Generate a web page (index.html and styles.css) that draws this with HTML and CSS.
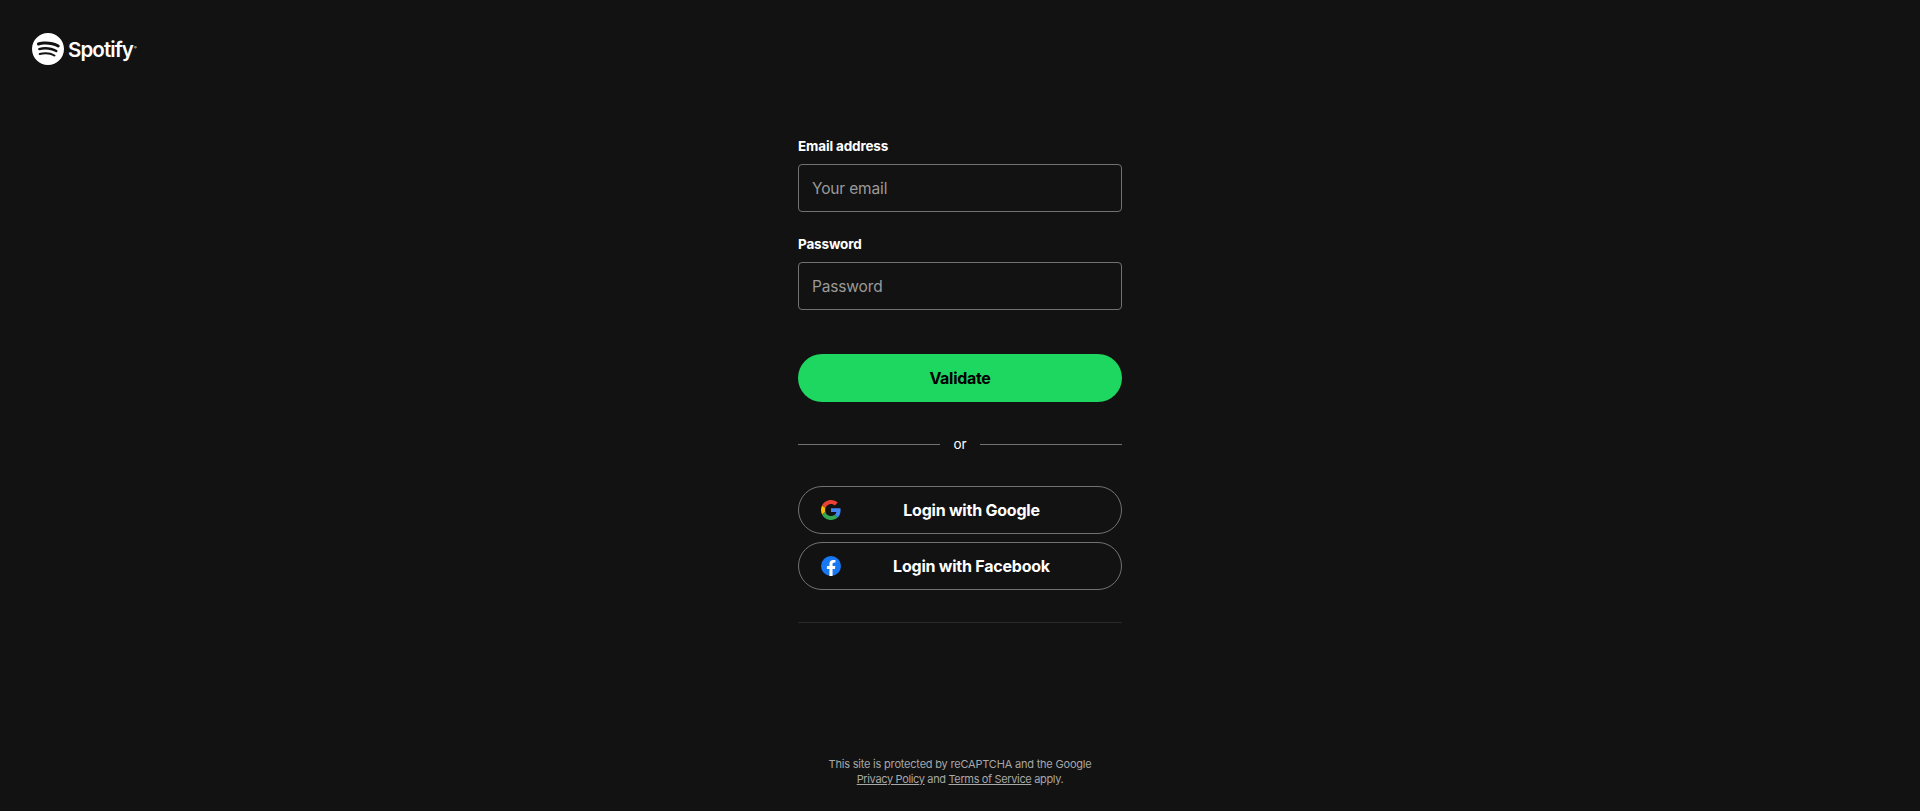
FILE: index.html
```html
<!DOCTYPE html>
<html lang="en">
<head>
  <meta charset="UTF-8" />
  <meta name="viewport" content="width=device-width, initial-scale=1.0"/>
  <title>Login - Spotify</title>
  <link rel="stylesheet" href="styles.css">
</head>
<body>
  <header class="topbar">
    <a class="brand" href="#">
      <svg class="brand-icon" viewBox="0 0 24 24"><path fill="#fff" d="M12 0C5.4 0 0 5.4 0 12s5.4 12 12 12 12-5.4 12-12S18.66 0 12 0zm5.521 17.34c-.24.359-.66.48-1.021.24-2.82-1.74-6.36-2.101-10.561-1.141-.418.122-.779-.179-.899-.539-.12-.421.18-.78.54-.9 4.56-1.021 8.52-.6 11.64 1.32.42.18.479.659.301 1.02zm1.44-3.3c-.301.42-.841.6-1.262.3-3.239-1.98-8.159-2.58-11.939-1.38-.479.12-1.02-.12-1.14-.6-.12-.48.12-1.021.6-1.141C9.6 9.9 15 10.561 18.72 12.84c.361.181.54.78.241 1.2zm.12-3.36C15.24 8.4 8.82 8.16 5.16 9.301c-.6.179-1.2-.181-1.38-.721-.18-.601.18-1.2.72-1.381 4.26-1.26 11.28-1.02 15.721 1.621.539.3.719 1.02.419 1.56-.299.421-1.02.599-1.559.3z"/></svg>
      <span class="brand-name">Spotify</span>
    </a>
  </header>

  <main class="login">
    <form class="login-form">
      <div class="field">
        <label for="email">Email address</label>
        <input type="text" id="email" placeholder="Your email"/>
      </div>
      <div class="field">
        <label for="password">Password</label>
        <input type="password" id="password" placeholder="Password"/>
      </div>
      <button type="button" class="btn-validate">Validate</button>
    </form>

    <div class="divider"><span>or</span></div>

    <div class="socials">
      <button type="button" class="btn-social">
        <svg class="social-icon" viewBox="0 0 48 48">
          <path fill="#EA4335" d="M24 9.5c3.54 0 6.71 1.22 9.21 3.6l6.85-6.85C35.9 2.38 30.47 0 24 0 14.62 0 6.51 5.38 2.56 13.22l7.98 6.19C12.43 13.72 17.74 9.5 24 9.5z"/>
          <path fill="#4285F4" d="M46.98 24.55c0-1.57-.15-3.09-.38-4.55H24v9.02h12.94c-.58 2.96-2.26 5.48-4.78 7.18l7.73 6c4.51-4.18 7.09-10.36 7.09-17.65z"/>
          <path fill="#FBBC05" d="M10.53 28.59c-.48-1.45-.76-2.99-.76-4.59s.27-3.14.76-4.59l-7.98-6.19C.92 16.46 0 20.12 0 24c0 3.88.92 7.54 2.56 10.78l7.97-6.19z"/>
          <path fill="#34A853" d="M24 48c6.48 0 11.93-2.13 15.89-5.81l-7.73-6c-2.15 1.45-4.92 2.3-8.16 2.3-6.26 0-11.57-4.22-13.47-9.91l-7.98 6.19C6.51 42.62 14.62 48 24 48z"/>
        </svg>
        <span class="social-label">Login with Google</span>
      </button>
      <button type="button" class="btn-social">
        <svg class="social-icon" viewBox="0 0 24 24">
          <circle cx="12" cy="12" r="12" fill="#1877F2"/>
          <path fill="#fff" d="M16.67 15.47 17.2 12h-3.33V9.75c0-.95.47-1.87 1.96-1.87h1.51V4.93s-1.37-.23-2.69-.23c-2.74 0-4.53 1.66-4.53 4.67V12H7.08v3.47h3.04V24a12.1 12.1 0 0 0 3.75 0v-8.53h2.8z"/>
        </svg>
        <span class="social-label">Login with Facebook</span>
      </button>
    </div>

    <hr class="rule"/>
  </main>

  <footer class="legal">
    <p>This site is protected by reCAPTCHA and the Google</p>
    <p><a href="#">Privacy Policy</a> and <a href="#">Terms of Service</a> apply.</p>
  </footer>
</body>
</html>
```

FILE: styles.css
```css
* {
  box-sizing: border-box;
}

html, body {
  height: 100%;
}

body {
  margin: 0;
  background: #121212;
  color: white;
  font-family: Inter, "Noto Sans", sans-serif;
  display: flex;
  flex-direction: column;
}

.topbar {
  padding: 32px 32px 0;
  height: 136px;
}

.brand {
  display: flex;
  align-items: center;
  gap: 4px;
  width: fit-content;
  color: white;
  text-decoration: none;
}

.brand-icon {
  width: 32px;
  height: 32px;
}

.brand-name {
  font-size: 20.5px;
  font-weight: 600;
  letter-spacing: -0.9px;
  line-height: 32px;
}

.brand-name::after {
  content: "®";
  font-size: 4px;
  letter-spacing: 0;
  vertical-align: 8px;
  margin-left: 1px;
}

.login {
  width: 324px;
  margin: 0 auto;
}

.field {
  margin-bottom: 22px;
}

.field label {
  display: block;
  font-size: 13.5px;
  font-weight: 700;
  letter-spacing: -0.15px;
  line-height: 20px;
  margin-bottom: 8px;
}

.field input {
  display: block;
  width: 100%;
  height: 48px;
  padding: 0 13px;
  background: transparent;
  border: 1px solid #727272;
  border-radius: 4px;
  color: white;
  font-family: inherit;
  font-size: 15.5px;
  letter-spacing: -0.15px;
}

.field input::placeholder {
  color: #9a9a9a;
  opacity: 1;
}

.btn-validate {
  display: block;
  width: 100%;
  height: 48px;
  margin-top: 44px;
  background: #1ed760;
  color: black;
  border: none;
  border-radius: 24px;
  font-family: inherit;
  font-size: 16px;
  font-weight: 700;
  letter-spacing: -0.3px;
  cursor: pointer;
}

.divider {
  display: flex;
  align-items: center;
  gap: 13px;
  margin-top: 32px;
  height: 20px;
  font-size: 13.5px;
  color: white;
}

.divider::before, .divider::after {
  content: "";
  flex: 1;
  height: 1px;
  background: #727272;
}

.socials {
  display: flex;
  flex-direction: column;
  gap: 8px;
  margin-top: 32px;
}

.btn-social {
  display: flex;
  align-items: center;
  width: 100%;
  height: 48px;
  padding: 0 19px 0 22px;
  background: transparent;
  color: white;
  border: 1px solid #727272;
  border-radius: 24px;
  font-family: inherit;
  font-size: 16px;
  font-weight: 700;
  letter-spacing: -0.22px;
  cursor: pointer;
}

.social-icon {
  width: 20px;
  height: 20px;
  flex-shrink: 0;
}

.social-label {
  flex: 1;
  text-align: center;
}

.rule {
  margin: 32px 0 0;
  border: none;
  border-top: 1px solid #292929;
}

.legal {
  margin-top: auto;
  padding-bottom: 24px;
  text-align: center;
  font-size: 11px;
  letter-spacing: -0.2px;
  line-height: 15px;
  color: #a7a7a7;
}

.legal p {
  margin: 0;
}

.legal p + p {
  letter-spacing: -0.35px;
}

.legal a {
  color: #a7a7a7;
}
```
